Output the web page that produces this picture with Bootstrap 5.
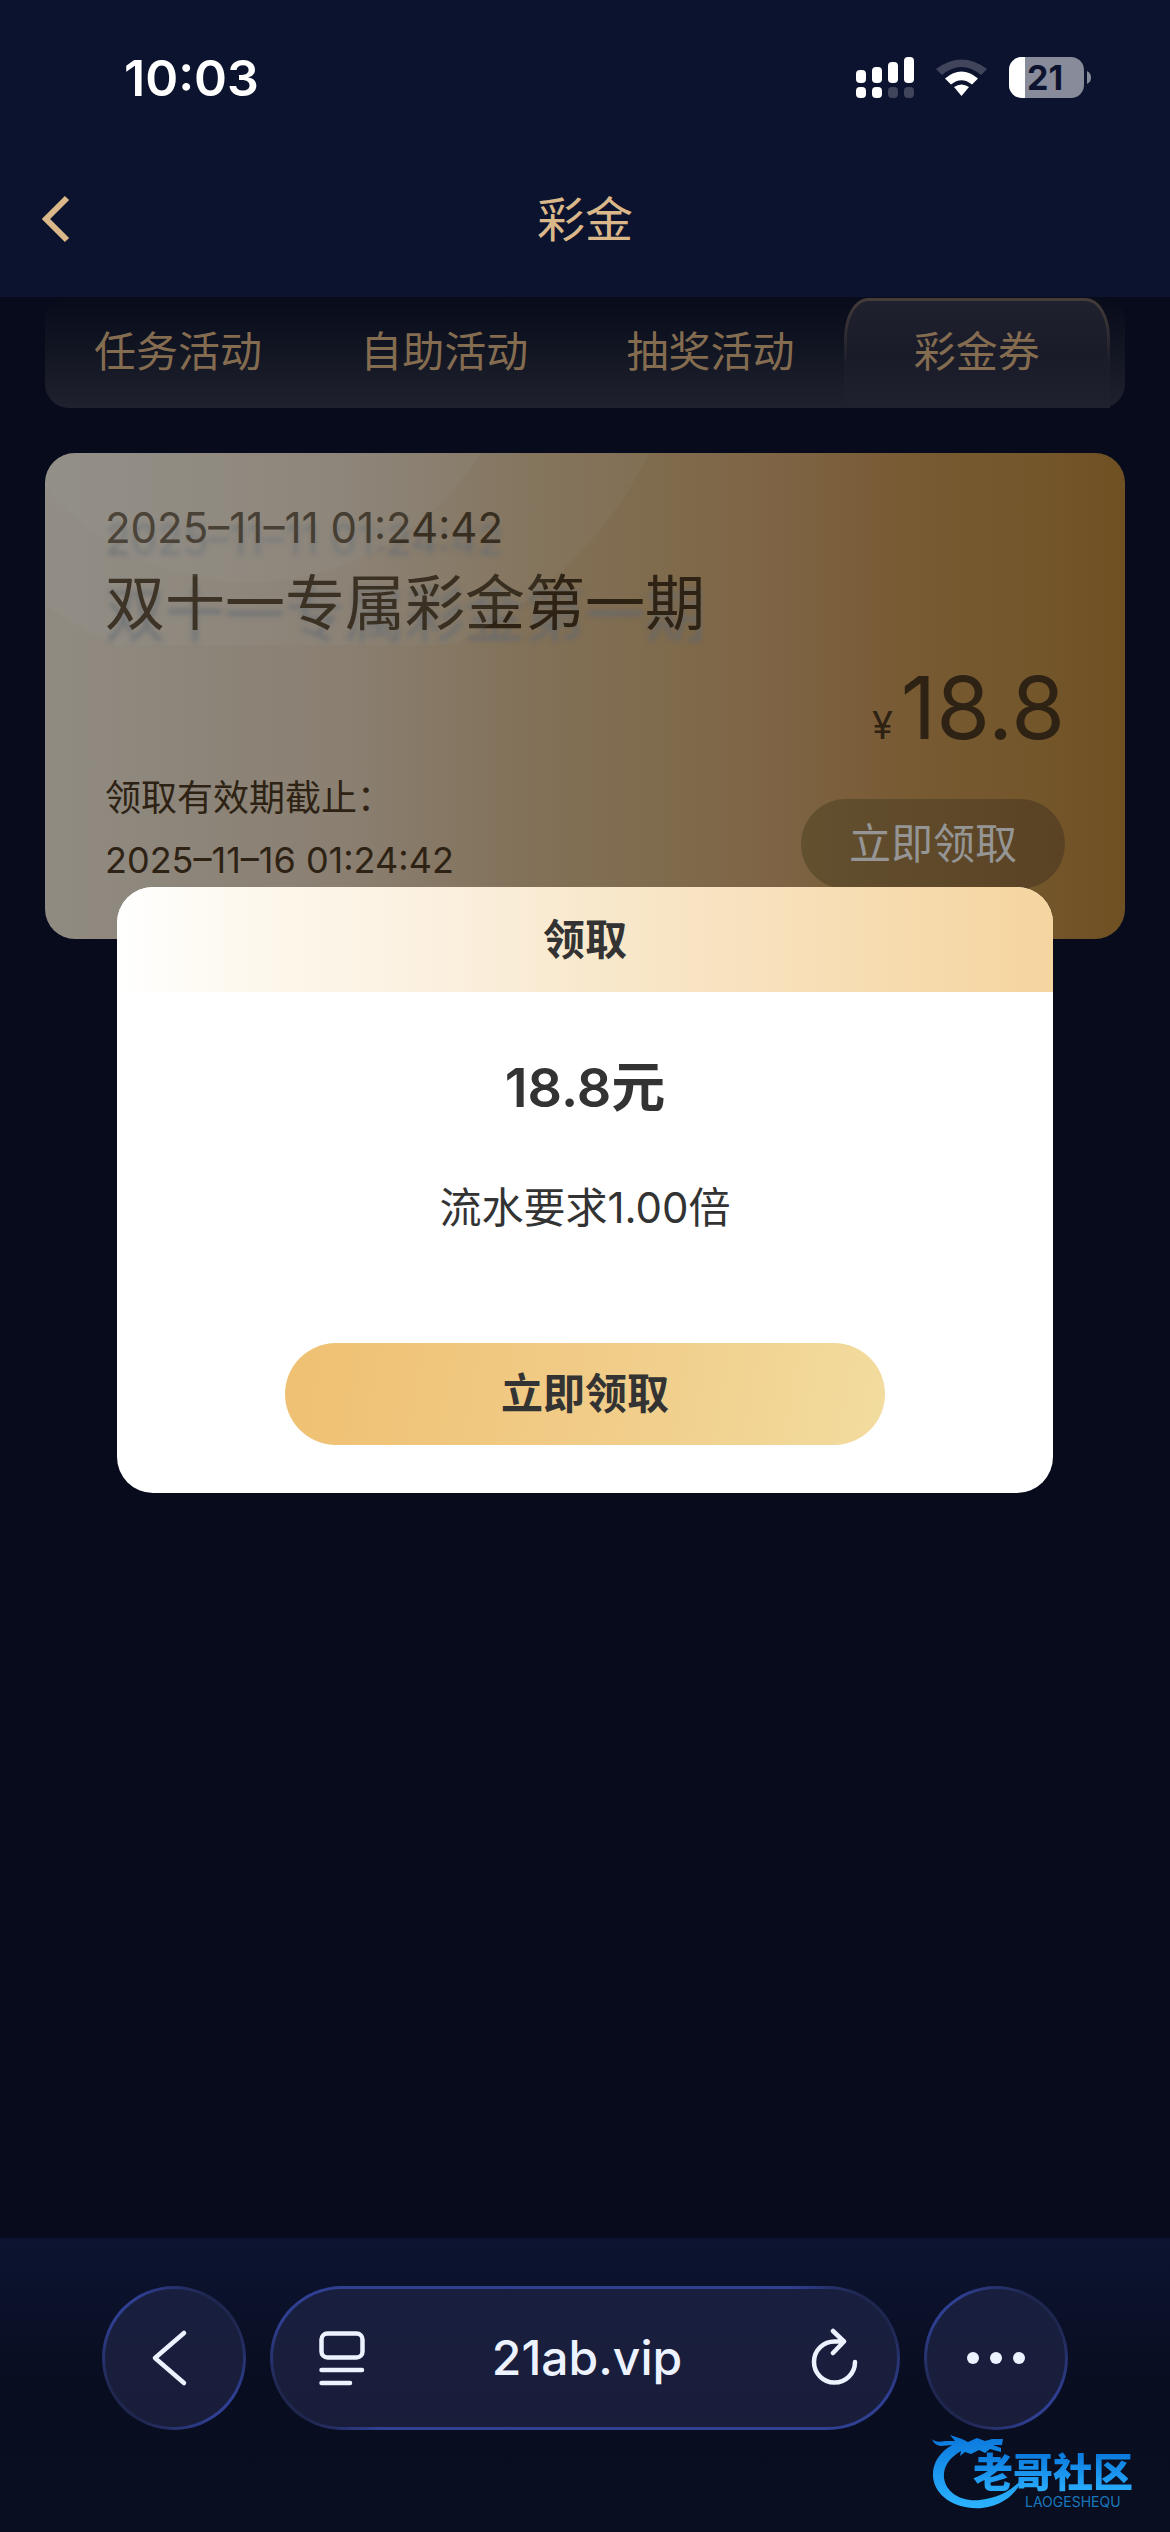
<!DOCTYPE html>
<html lang="zh-CN">
<head>
<meta charset="utf-8">
<meta name="viewport" content="width=device-width, initial-scale=1">
<title>彩金</title>
<link href="https://cdn.jsdelivr.net/npm/bootstrap@5.3.0/dist/css/bootstrap.min.css" rel="stylesheet">
<style>
  body { background: #0c132e; font-family: Inter, "Noto Sans CJK SC", sans-serif; font-size: 42px; line-height: 60px; color: #333; }
  button { font: inherit; border: 0; padding: 0; background: none; color: inherit; }
  svg { display: block; flex: none; }

  .statusbar { height: 142px; padding: 48px 78px 0 124px; color: #fff; }
  .clock { font-size: 50px; font-weight: 600; }
  .battery-text { font-family: Inter, sans-serif; font-size: 34px; font-weight: 700; }

  .app-header { height: 155px; background: #0c132e; z-index: 3; color: #dab889; }
  .app-title { font-size: 48px; font-weight: 400; }
  .back-btn { left: 38px; top: 0; bottom: 0; z-index: 1; }

  .stage { background: #070b1b; z-index: 0; }
  .content-area { padding: 0 45px; }

  .tab-strip { height: 111px; padding: 1px 15px 0 0; border-radius: 24px; background: linear-gradient(#080b1a, #111421 45%, #1f212e); color: #846c50; }
  .tab-item { flex: 1 1 0; border: 3px solid transparent; border-bottom: 0; padding-bottom: 6px; }
  .tab-item.active { border-radius: 24px 24px 0 0 / 40px 40px 0 0; background: linear-gradient(#1f222e, #191b28 50%, #1f212e) padding-box, linear-gradient(#463d3a, #1b1d2a 60%, #1f212e) border-box; }

  .coupon { margin-top: 45px; height: 486px; padding: 45px 60px 45px 60px; border-radius: 30px; overflow: hidden; color: #2d2213;
    background: linear-gradient(90deg, #908b82, #8a7f71 28%, #827158 45%, #7f6a4c 58%, #7e6444 68%, #785a33 80%, #74562b 92%, #6f5023); }
  .coupon-shine { left: 0; top: 0; z-index: 1; pointer-events: none; }
  .cast { text-shadow: 0 12px 5px rgba(98, 104, 112, .75); }
  .coupon-name { font-size: 60px; line-height: 90px; font-weight: 400; }
  .amount { margin-top: 12px; font-size: 87px; line-height: 96px; font-weight: 400; }
  .amount-sign { font-size: 38px; }
  .expiry { margin-top: -6px; font-size: 36px; line-height: 62px; }
  .claim-dim { width: 264px; height: 90px; margin-top: 26px; border-radius: 45px; background: linear-gradient(90deg, #62502f, #5a4224); color: #959595; }

  .overlay { z-index: 2; }
  .dialog-box { width: 80%; border-radius: 36px; overflow: hidden; background: #fff; }
  .dialog-head { height: 105px; font-size: 42px; font-weight: 700; background: linear-gradient(90deg, #fff, #fdf8ec 15%, #fbf0df 35%, #f8e8cb 52%, #f8e1bd 68%, #f5d59f); }
  .dialog-main { padding: 60px 60px 48px; }
  .dialog-sum { font-size: 54px; line-height: 72px; font-weight: 600; }
  .dialog-rule { margin-top: 54px; }
  .claim-btn { width: 600px; max-width: 100%; height: 102px; margin-top: 105px; border-radius: 51px; font-weight: 700; background: linear-gradient(100deg, #efc072, #f1cd89 55%, #f2dc9f); }

  .browser-bar { height: 294px; padding: 48px 102px 0; gap: 24px; background: linear-gradient(#0c1431, #090d20 50%, #0a0e21); color: #edf2ff; }
  .glass { height: 144px; border: 3px solid transparent; border-radius: 72px;
    background: linear-gradient(#181f3e, #191d3a) padding-box,
      radial-gradient(circle at 100% 0, #1f2750 40px, rgba(31, 39, 80, 0) 110px) border-box,
      radial-gradient(circle at 0 100%, #1f2750 40px, rgba(31, 39, 80, 0) 110px) border-box,
      linear-gradient(#2f3f92, #2f3f92) border-box; }
  .round-btn { width: 144px; }
  .round-btn.nav-back { padding-right: 8px; }
  .address { padding: 0 38px 0 44px; }
  .address-text { font-size: 48px; font-weight: 500; color: inherit; text-decoration: none; }

  .site-logo { right: 15px; bottom: 20px; color: #1594ee; }
  .logo-words { left: 42px; top: 20px; }
  .logo-name { font-size: 40px; line-height: 42px; font-weight: 900; background: linear-gradient(#0878dc, #2cb0ff); -webkit-background-clip: text; background-clip: text; color: transparent; white-space: nowrap; }
  .logo-latin { margin-left: 52px; font-size: 14px; line-height: 16px; color: #1777bd; }
</style>
</head>
<body class="min-vh-100 d-flex flex-column m-0">

<div class="statusbar d-flex align-items-start justify-content-between">
  <span class="clock">10:03</span>
  <svg width="236" height="66" viewBox="0 -3 236 66" aria-hidden="true">
    <g fill="#fff">
      <rect x="0" y="19" width="10" height="13" rx="4"/><rect x="16" y="16" width="10" height="16" rx="4"/>
      <rect x="32" y="11" width="10" height="21" rx="4"/><rect x="48" y="6" width="10" height="26" rx="4"/>
      <rect x="0" y="36" width="10" height="11" rx="4"/><rect x="16" y="36" width="10" height="11" rx="4"/>
      <g fill="#41455b"><rect x="32" y="36" width="10" height="11" rx="4"/><rect x="48" y="36" width="10" height="11" rx="4"/></g>
    </g>
    <path d="M80 18 Q105.500 -1 131 18 L125 24 Q105.500 8 86 24 Z" fill="#41455b"/>
    <path d="M89 27.500 Q105.500 13.500 122 27.500 L116 33.500 Q105.500 25 95 33.500 Z" fill="#fff"/>
    <path d="M98 36 Q105.500 31 113 36 L105.500 45 Z" fill="#fff"/>
    <defs><clipPath id="cell"><rect x="153" y="6" width="75" height="41" rx="13"/></clipPath></defs>
    <g clip-path="url(#cell)"><rect x="153" y="6" width="75" height="41" fill="#878b9a"/><rect x="153" y="6" width="16" height="41" fill="#fff"/></g>
    <path d="M231 20 Q235 22 235 26.500 T231 33 Z" fill="#878b9a"/>
    <text x="171" y="39" class="battery-text" fill="#0c132e">21</text>
  </svg>
</div>

<div class="stage position-relative flex-grow-1">
  <header class="app-header position-relative d-flex align-items-center justify-content-center">
    <button type="button" class="back-btn position-absolute" aria-label="返回">
      <svg width="36" height="54" viewBox="0 0 36 54"><path d="M29 5 L8 26 L29 47" fill="none" stroke="#dab889" stroke-width="6"/></svg>
    </button>
    <h1 class="app-title m-0">彩金</h1>
  </header>

  <main class="content-area">
    <nav class="tab-strip d-flex" aria-label="活动分类">
      <button type="button" class="tab-item">任务活动</button>
      <button type="button" class="tab-item">自助活动</button>
      <button type="button" class="tab-item">抽奖活动</button>
      <button type="button" class="tab-item active" aria-current="page">彩金券</button>
    </nav>

    <section class="coupon position-relative d-flex flex-column">
      <svg class="coupon-shine position-absolute" width="660" height="192" viewBox="0 0 660 192" aria-hidden="true">
        <defs><linearGradient id="shine" x1="0" x2="620" y1="0" y2="0" gradientUnits="userSpaceOnUse"><stop stop-color="#9a9b98" stop-opacity=".16"/><stop offset="1" stop-color="#9a9b98" stop-opacity=".08"/></linearGradient></defs>
        <circle cx="205" cy="-141" r="270" fill="url(#shine)"/>
        <circle cx="238" cy="-180" r="408" fill="url(#shine)"/>
      </svg>
      <span class="cast">2025–11–11 01:24:42</span>
      <h2 class="coupon-name cast m-0">双十一专属彩金第一期</h2>
      <div class="amount d-flex align-items-baseline justify-content-end gap-2"><span class="amount-sign">¥</span>18.8</div>
      <div class="d-flex justify-content-between align-items-start">
        <div class="expiry">领取有效期截止：<br>2025–11–16 01:24:42</div>
        <button type="button" class="claim-dim">立即领取</button>
      </div>
    </section>
  </main>

  <div class="overlay position-absolute top-0 start-0 w-100 h-100 d-flex align-items-center justify-content-center">
    <div class="dialog-box" role="dialog" aria-labelledby="dialog-title">
      <div id="dialog-title" class="dialog-head d-flex align-items-center justify-content-center">领取</div>
      <div class="dialog-main d-flex flex-column align-items-center">
        <div class="dialog-sum">18.8元</div>
        <div class="dialog-rule">流水要求1.00倍</div>
        <button type="button" class="claim-btn">立即领取</button>
      </div>
    </div>
  </div>
</div>

<footer class="browser-bar position-relative d-flex align-items-start">
  <button type="button" class="glass round-btn nav-back d-flex align-items-center justify-content-center" aria-label="后退">
    <svg width="46" height="60" viewBox="0 0 46 60"><path d="M37 5 L8 30 L37 55" fill="none" stroke="#edf2ff" stroke-width="4.500" stroke-linecap="round" stroke-linejoin="round"/></svg>
  </button>
  <div class="glass address flex-grow-1 d-flex align-items-center justify-content-between">
    <button type="button" aria-label="页面菜单">
      <svg width="50" height="60" viewBox="0 0 50 60" fill="none" stroke="#edf2ff" stroke-width="4.500" stroke-linecap="round"><rect x="4.500" y="5.500" width="41" height="24" rx="6"/><path d="M4.500 42H45M4.500 55H33"/></svg>
    </button>
    <a class="address-text" href="#">21ab.vip</a>
    <button type="button" aria-label="刷新">
      <svg width="52" height="60" viewBox="0 0 52 60" fill="none" stroke="#edf2ff" stroke-width="4.500" stroke-linecap="round" stroke-linejoin="round"><path d="M48 34 A20.500 20.500 0 1 1 28 13.500 H37M26 3 L37 13.500 L26 25"/></svg>
    </button>
  </div>
  <button type="button" class="glass round-btn d-flex align-items-center justify-content-center" aria-label="更多">
    <svg width="60" height="14" viewBox="0 0 60 14" fill="#edf2ff"><circle cx="7" cy="7" r="6"/><circle cx="30" cy="7" r="6"/><circle cx="53" cy="7" r="6"/></svg>
  </button>

  <div class="site-logo position-absolute">
    <svg width="224" height="80" viewBox="0 0 224 80" aria-hidden="true">
      <defs><linearGradient id="sea" x2="0" y2="1"><stop stop-color="#0a78dc"/><stop offset="1" stop-color="#2cb4ff"/></linearGradient></defs>
      <path fill="url(#sea)" d="M1 7 Q5 11 14 9 L24 9 L19 3 L31 7 L37 10 L46 6 L54 9 L61 7 L72 7 L71 13 L62 13 L70 16 L70 20 L59 17 L54 21 L48 18 L40 22 L34 20 L29 24 L30 19 C18 26 12 35 13 46 C15 60 29 70 49 68 C67 66 80 59 90 48 C87 61 71 74 51 76 C24 78 4 64 2 45 C1 31 9 20 21 13 L10 14 Q3 13 1 7 Z"/>
    </svg>
    <div class="logo-words position-absolute d-flex flex-column">
      <span class="logo-name">老哥社区</span>
      <span class="logo-latin">LAOGESHEQU</span>
    </div>
  </div>
</footer>

<script src="https://cdn.jsdelivr.net/npm/bootstrap@5.3.0/dist/js/bootstrap.bundle.min.js"></script>
</body>
</html>
